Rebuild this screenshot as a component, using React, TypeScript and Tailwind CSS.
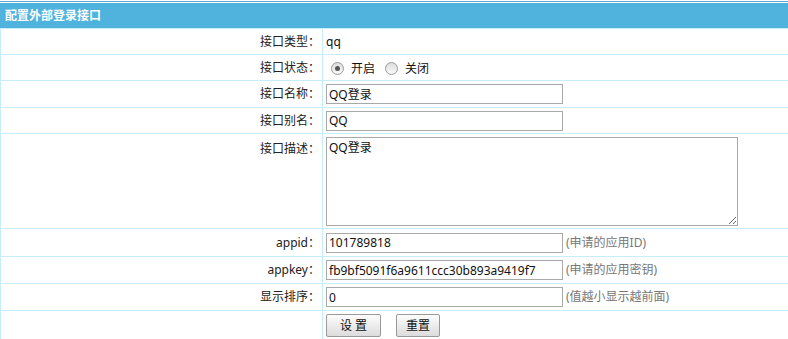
import React from 'react';

const font = { fontFamily: '"Noto Sans", "Noto Sans CJK SC", sans-serif' };

function Label({ children }: { children: React.ReactNode }) {
  return <span className="text-[12px] text-[#222]">{children}</span>;
}

function TextInput({ value }: { value: string }) {
  return (
    <input
      readOnly
      value={value}
      className="w-[237px] h-[20px] border border-[#a9a9a9] px-[2px] text-[12px] text-[#111] outline-none bg-white"
    />
  );
}

function Hint({ children }: { children: React.ReactNode }) {
  return <span className="ml-[3px] text-[12px] text-[#777]">{children}</span>;
}

function Radio({ checked }: { checked?: boolean }) {
  return (
    <span className="w-[13px] h-[13px] rounded-full border border-[#9a9a9a] bg-gradient-to-b from-[#dcdcdc] to-[#fafafa] flex items-center justify-center">
      {checked && <span className="w-[5px] h-[5px] rounded-full bg-[#555]" />}
    </span>
  );
}

function Row({ label, h, top, children }: { label: string; h: string; top?: boolean; children: React.ReactNode }) {
  return (
    <div className={`flex border-b border-[#c6edfb] ${h}`}>
      <div className={`w-[322px] shrink-0 border-r border-[#c6edfb] flex justify-end pr-[2px] ${top ? 'items-start pt-[6px]' : 'items-center'}`}>
        <Label>{label}</Label>
      </div>
      <div className={`flex-1 flex pl-[3px] ${top ? 'items-start pt-[3px]' : 'items-center'}`}>{children}</div>
    </div>
  );
}

export default function App() {
  return (
    <div className="w-[788px] h-[339px] bg-white overflow-hidden" style={font}>
      <div className="mt-px border-t border-[#5ea9d3] pt-px">
        <div className="h-[25px] bg-[#4fb3de] flex items-center pl-[5px] text-[12px] font-bold text-white">
          配置外部登录接口
        </div>
      </div>
      <div className="border-l border-[#c6edfb]">
        <div className="border-t border-[#c6edfb]" />
        <Row label="接口类型：" h="h-[26px]">
          <span className="text-[12px] text-[#111]">qq</span>
        </Row>
        <Row label="接口状态：" h="h-[26px]">
          <div className="flex items-center pl-[5px] pt-[2px]">
            <Radio checked />
            <span className="ml-[7px] text-[12px] text-[#111]">开启</span>
            <span className="ml-[10px]"><Radio /></span>
            <span className="ml-[7px] text-[12px] text-[#111]">关闭</span>
          </div>
        </Row>
        <Row label="接口名称：" h="h-[27px]">
          <TextInput value="QQ登录" />
        </Row>
        <Row label="接口别名：" h="h-[26px]">
          <TextInput value="QQ" />
        </Row>
        <Row label="接口描述：" h="h-[95px]" top>
          <textarea
            readOnly
            value="QQ登录"
            className="w-[412px] h-[89px] border border-[#a9a9a9] px-[2px] py-px text-[12px] text-[#111] outline-none"
          />
        </Row>
        <Row label="appid：" h="h-[28px]">
          <TextInput value="101789818" />
          <Hint>(申请的应用ID)</Hint>
        </Row>
        <Row label="appkey：" h="h-[27px]">
          <TextInput value="fb9bf5091f6a9611ccc30b893a9419f7" />
          <Hint>(申请的应用密钥)</Hint>
        </Row>
        <Row label="显示排序：" h="h-[27px]">
          <TextInput value="0" />
          <Hint>(值越小显示越前面)</Hint>
        </Row>
        <div className="flex h-[40px]">
          <div className="w-[322px] shrink-0 border-r border-[#c6edfb]" />
          <div className="flex items-start pl-[3px] pt-[3px] gap-[15px]">
            <button className="w-[55px] h-[23px] border border-[#999] rounded-[2px] bg-gradient-to-b from-[#fdfdfd] to-[#dcdcdc] text-[12px] text-[#111]">
              设 置
            </button>
            <button className="w-[44px] h-[23px] border border-[#999] rounded-[2px] bg-gradient-to-b from-[#fdfdfd] to-[#dcdcdc] text-[12px] text-[#111]">
              重置
            </button>
          </div>
        </div>
      </div>
    </div>
  );
}
